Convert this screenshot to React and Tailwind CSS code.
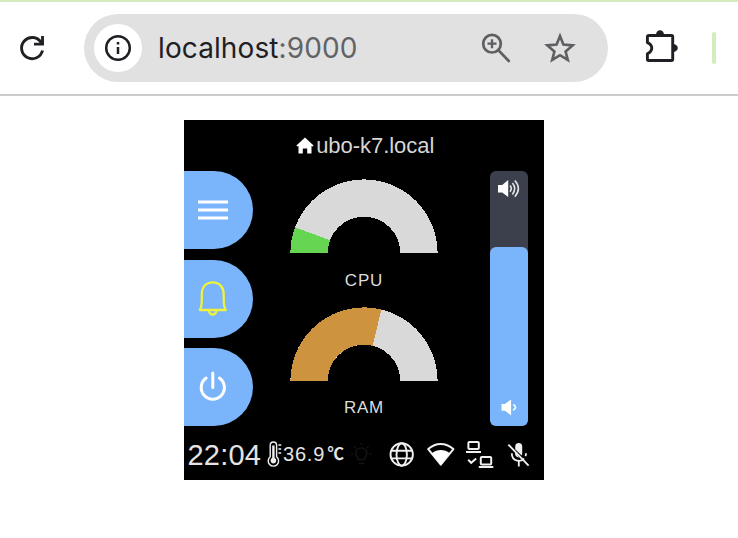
import React from "react";

const LIGHT = "#f0f0f0";

function BrowserBar() {
  return (
    <header className="flex h-24 items-center border-t-2 border-b-2 border-t-[#d4eabf] border-b-[#cccccc] bg-white">
      <svg className="ml-4 shrink-0" width="32" height="32" viewBox="16 32 32 32" fill="none">
        <path d="M41 42.2A10.6 10.6 0 1 0 42.5 50.5" stroke="#1f2024" strokeWidth="2.9" />
        <path d="M42.5 36V44.2H34" stroke="#1f2024" strokeWidth="2.8" />
        <path d="M37.5 44.8h6.3v-6z" fill="#1f2024" />
      </svg>
      <div className="ml-9 flex h-[68px] w-[524px] shrink-0 items-center rounded-full bg-[#e1e1e1] pl-2.5">
        <div className="flex size-12 items-center justify-center rounded-full bg-white">
          <svg width="28" height="28" viewBox="0 0 28 28" fill="none">
            <circle cx="14" cy="14" r="11.8" stroke="#1f2024" strokeWidth="2.5" />
            <path d="M14 13v7M14 8v2.6" stroke="#1f2024" strokeWidth="2.5" />
          </svg>
        </div>
        <div className="ml-4 w-[322px] whitespace-nowrap font-[Inter,sans-serif] text-[28px] leading-8 tracking-[0.1px] text-[#1f2024]">
          localhost<span className="text-[#626366]">:9000</span>
        </div>
        <svg width="32" height="32" viewBox="480 32 32 32" fill="none" stroke="#5e5f62" strokeWidth="2.7">
          <circle cx="492" cy="43.7" r="8.8" />
          <path d="M492 39.2v9M487.5 43.7h9" strokeWidth="2.3" />
          <path d="M498.2 50l10.6 11" strokeWidth="2.6" strokeLinecap="round" />
        </svg>
        <svg className="ml-8" width="32" height="32" viewBox="544 32 32 32" fill="none">
          <path
            d="M560 36l3.4 8.6 9.3.8-7.1 6.1 2.2 8.4-7.8-4.7-7.8 4.7 2.2-8.4-7.1-6.1 9.3-.8z"
            stroke="#5e5f62"
            strokeWidth="2.6"
          />
        </svg>
      </div>
      <svg className="ml-9 shrink-0" width="36" height="36" viewBox="644 30 36 36" fill="none">
        <path
          d="M649.2 35.5H671.4Q672.7 35.5 672.7 36.8V59.2Q672.7 60.5 671.4 60.5H648.6Q647.4 60.5 647.4 59.2V53.8C653.2 51 653.2 45 647.4 42.6V36.8Q647.4 35.5 649.2 35.5Z"
          stroke="#1f2024"
          strokeWidth="2.9"
          strokeLinejoin="round"
        />
        <path d="M656 35a4 4.8 0 0 1 8 0zM673 44a4.8 4 0 0 1 0 8z" fill="#1f2024" />
      </svg>
      <div className="ml-8 h-8 w-1 shrink-0 rounded-full bg-[#d4eabf]" />
    </header>
  );
}

function SideButton({ children }) {
  return (
    <button className="flex h-[78px] w-[69px] items-center rounded-r-full bg-[#7ab4fa] pl-[10px]">
      <svg width="38" height="40" viewBox="0 0 38 40" fill="none">
        {children}
      </svg>
    </button>
  );
}

function Gauge({ label, angle, color }) {
  const rad = (angle * Math.PI) / 180;
  const outer = 73.6;
  const inner = 36.3;
  const point = (r) => `${74 - r * Math.cos(rad)} ${74 - r * Math.sin(rad)}`;
  return (
    <div className="flex h-[127.5px] flex-col items-center">
      <svg className="shrink-0" width="148" height="74" viewBox="0 0 148 74" shapeRendering="crispEdges">
        <path d="M.4 74A73.6 73.6 0 0 1 147.6 74H110.3A36.3 36.3 0 0 0 37.7 74Z" fill="#d9d9d9" />
        <path
          d={`M.4 74A${outer} ${outer} 0 0 1 ${point(outer)}L${point(inner)}A${inner} ${inner} 0 0 0 37.7 74Z`}
          fill={color}
        />
      </svg>
      <div className="mt-[17.5px] text-[17px] leading-5 tracking-[0.8px] text-[#dcdcdc]">{label}</div>
    </div>
  );
}

function VolumeSlider() {
  return (
    <div className="flex h-[255px] w-[37.5px] flex-col rounded-md bg-[#3b404c]">
      <div className="h-[76px] pt-1.5 pl-1.5">
        <svg width="26" height="24" viewBox="496 177 26 24" fill="none">
          <path d="M498 185h4.2l6-5v17l-6-4.6H498z" fill="#fff" />
          <path d="M510 185.5q2.6 3 0 6.2M512.4 183q4.6 5.5 0 11.4M514.8 180.5q7.2 8 0 16.2" stroke="#e2e3e5" strokeWidth="1.6" />
        </svg>
      </div>
      <div className="flex flex-1 items-end rounded-md bg-[#7ab4fa] pb-1.5 pl-1.5">
        <svg width="26" height="24" viewBox="496 396.5 26 24" fill="none">
          <path d="M501.5 404.5h3.4l6.2-4.6v16l-6.2-4.6h-3.4z" fill="#fff" />
          <path d="M513.2 405q4.6 2.8 0 5.8" stroke="#fff" strokeWidth="1.7" />
        </svg>
      </div>
    </div>
  );
}

function StatusBar() {
  return (
    <footer className="flex h-[53px] items-center">
      <div className="w-[78px] whitespace-nowrap pt-[3px] pl-[3.5px] text-[29px] leading-none tracking-[0.2px]">22:04</div>
      <svg width="21" height="30" viewBox="262 439 21 30" fill="none" stroke={LIGHT}>
        <path d="M270.2 456.8V445.2a3.2 3.2 0 0 1 6.4 0V456.8a5.2 5.2 0 1 1-6.4 0z" strokeWidth="1.4" />
        <circle cx="273.4" cy="460.6" r="2.8" fill={LIGHT} stroke="none" />
        <path d="M273.4 445.5v14" strokeWidth="2.4" />
        <path d="M278.4 445h2.8M278.4 449h2.8M278.4 453h2.8" strokeWidth="1.3" />
      </svg>
      <div className="w-[44.5px] whitespace-nowrap text-[20px] leading-none tracking-[0.8px]">36.9</div>
      <div className="w-[21.5px] whitespace-nowrap font-['Noto_Sans_CJK_SC',sans-serif] text-[16.5px] font-bold leading-none">℃</div>
      <svg width="36" height="30" viewBox="349 439 36 30" fill="none" stroke="#151515" strokeWidth="1.4">
        <path d="M358.5 459.5c0-2-2.8-2.8-2.8-6a5.6 5.6 0 0 1 11.2 0c0 3.2-2.8 4-2.8 6zM359 463.5h5M361.3 443v2M351 454h2M369.5 454h2M354 446.5l1.5 1.5M368.5 446.5l-1.5 1.5" />
      </svg>
      <svg width="33" height="30" viewBox="385 439 33 30" fill="none" stroke={LIGHT} strokeWidth="1.9">
        <circle cx="401.7" cy="454.5" r="11.2" />
        <ellipse cx="401.7" cy="454.5" rx="5.2" ry="11.2" />
        <path d="M391 450.7h21.4M391 458.4h21.4" />
      </svg>
      <svg width="44" height="30" viewBox="418 439 44 30" fill="none">
        <path d="M428.2 449.1C436 442.4 445.4 442.4 453.4 449.1L440.8 464.6Z" stroke={LIGHT} strokeWidth="2" strokeLinejoin="round" />
        <path d="M431.8 453.2C437.5 449 444.2 449 449.8 453.2L440.8 465Z" fill="#fff" />
      </svg>
      <svg width="38" height="30" viewBox="462 439 38 30" fill="none" stroke={LIGHT} strokeWidth="2">
        <rect x="468.4" y="441.9" width="10.4" height="7.2" rx="1" />
        <path d="M466 451.9h15M478.8 467h14.5" />
        <rect x="480.8" y="457.1" width="10.4" height="7.4" rx="1" />
        <path d="M468.2 459.8l3 3 5-4.2" />
      </svg>
      <svg width="34" height="30" viewBox="500 439 34 30" fill="none">
        <path d="M515.2 446.5a3.5 3.5 0 0 1 7 0v7.2q0 1-.5 1.8l-6.5-6.2z" fill={LIGHT} />
        <path d="M515.2 451.7v2.5a3.4 3.4 0 0 0 3.8 3.2z" fill={LIGHT} />
        <path d="M511.8 453.3c0 9.2 10 8.5 12.2 5.3M526 453.2q0 1.7-.6 3M518.8 460.8v5.6" stroke={LIGHT} strokeWidth="1.8" />
        <path d="M508.4 444.6l20.2 21" stroke={LIGHT} strokeWidth="1.9" />
      </svg>
    </footer>
  );
}

export default function App() {
  return (
    <div className="h-[538px] w-[738px] overflow-hidden bg-white">
      <BrowserBar />
      <main className="mt-6 ml-[184px] h-[360px] w-[360px] bg-black font-['Liberation_Sans',sans-serif] text-[#e4e4e4]">
        <div className="flex h-[51px] items-center pl-[112px]">
          <svg className="shrink-0" width="19" height="20" viewBox="0 0 19 20">
            <path d="M9 1.6L17.6 9.4L16.6 10.6L15.5 9.9V17.4H11.2V12.6H6.8V17.4H2.5V9.9L1.4 10.6L.4 9.4Z" fill="#fff" />
          </svg>
          <h1 className="ml-[1.2px] whitespace-nowrap text-[22px] leading-none tracking-[-0.05px] text-[#d6d6d6]">ubo-k7.local</h1>
        </div>
        <div className="flex h-64">
          <nav className="flex w-[106px] flex-col gap-[10.5px]">
            <SideButton>
              <path d="M4 12h30M4 20h30M4 28h30" stroke="#fff" strokeWidth="3.2" />
            </SideButton>
            <SideButton>
              <path
                d="M5.8 31C7.6 28 7.8 26 7.8 21V15.3C7.8 8 12 3.4 18.7 3.4S29.7 8 29.7 15.3V21C29.7 26 30 28 31.8 31Z"
                stroke="#f0f23e"
                strokeWidth="2.3"
                strokeLinejoin="round"
              />
              <path d="M15 31.6a3.7 3.9 0 0 0 7.4 0" stroke="#f0f23e" strokeWidth="2.3" />
            </SideButton>
            <SideButton>
              <path d="M12.2 11A11.6 11.6 0 1 0 25.4 11M18.8 6V20.6" stroke="#fff" strokeWidth="3" strokeLinecap="round" />
            </SideButton>
          </nav>
          <section className="w-[148px] pt-2">
            <Gauge label="CPU" angle={20.5} color="#66d551" />
            <Gauge label="RAM" angle={103.7} color="#cd933f" />
          </section>
          <div className="ml-[52px]">
            <VolumeSlider />
          </div>
        </div>
        <StatusBar />
      </main>
    </div>
  );
}
